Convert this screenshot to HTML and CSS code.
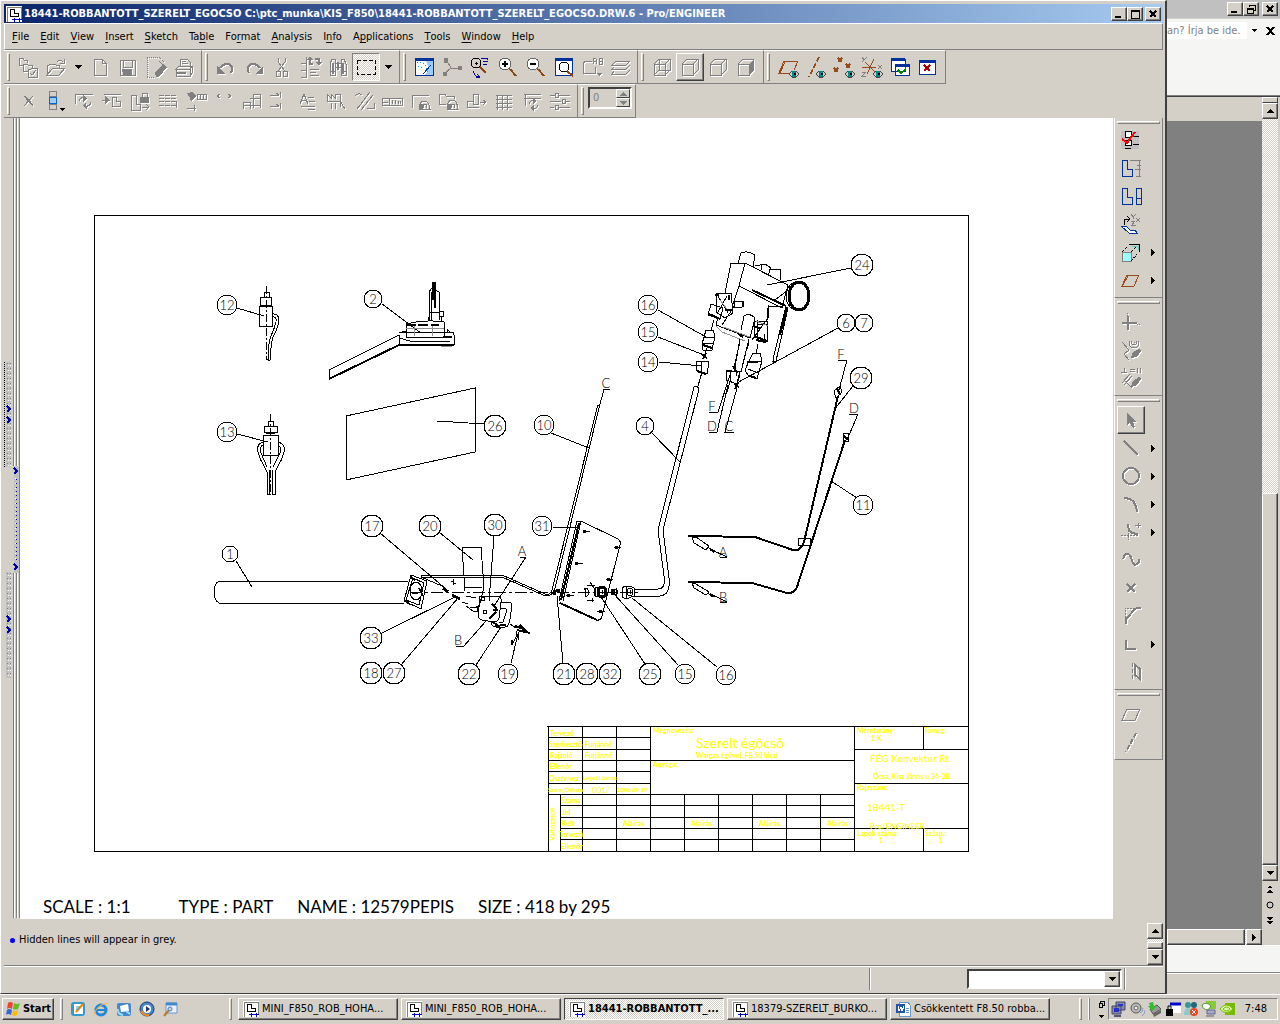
FILE: index.html
```
<!DOCTYPE html>
<html lang="en">
<head>
<meta charset="utf-8">
<title>18441-ROBBANTOTT_SZERELT_EGOCSO - Pro/ENGINEER</title>
<link rel="stylesheet" href="styles.css">
</head>
<body>
<svg class="defs" aria-hidden="true">
  <symbol id="app" viewBox="0 0 16 16"><path d="M0 0h16v16H0z" fill="#fff"/><path d="M1 16V1h14v12" fill="none" stroke="#808080"/><path d="M4 3v7h8V7H8V3z" fill="none" stroke="#000" stroke-width="1"/><path d="M6 13h10M8 12v4M13 12v4" stroke="#00c" fill="none"/></symbol>
  <symbol id="eye" viewBox="0 0 10 8"><path d="M0 4l3-3h4l3 3-3 3H3z" fill="#d4d0c8" stroke="#444"/><path d="M3 1h4v6H3z" fill="#088"/><path d="M5 3h2v2H5z" fill="#000"/></symbol>
  <symbol id="down" viewBox="0 0 7 4"><path d="M0 0h7L4 4H3z"/></symbol>
  <symbol id="up" viewBox="0 0 7 4"><path d="M0 4h7L4 0H3z"/></symbol>
  <symbol id="right" viewBox="0 0 4 7"><path d="M0 0v7l4-3V3z"/></symbol>
</svg>

<div class="desktop">
<main class="window">
  <header class="titlebar">
    <svg class="i16"><use href="#app"/></svg>
    <h1>18441-ROBBANTOTT_SZERELT_EGOCSO C:\ptc_munka\KIS_F850\18441-ROBBANTOTT_SZERELT_EGOCSO.DRW.6 - Pro/ENGINEER</h1>
    <button class="cap" aria-label="Minimize"><svg viewBox="0 0 12 10"><path d="M2 8h6" stroke-width="2"/></svg></button>
    <button class="cap" aria-label="Maximize"><svg viewBox="0 0 12 10"><path d="M2 2h8" stroke-width="2"/><path d="M2 1v8h8V1"/></svg></button>
    <button class="cap close" aria-label="Close"><svg viewBox="0 0 12 10"><path d="M3 2l6 6M9 2L3 8" stroke-width="2"/></svg></button>
  </header>
  <nav class="menubar">
    <button><u>F</u>ile</button><button><u>E</u>dit</button><button><u>V</u>iew</button><button><u>I</u>nsert</button><button><u>S</u>ketch</button><button>Ta<u>b</u>le</button><button>Fo<u>r</u>mat</button><button><u>A</u>nalysis</button><button>I<u>n</u>fo</button><button>A<u>p</u>plications</button><button><u>T</u>ools</button><button><u>W</u>indow</button><button><u>H</u>elp</button>
  </nav>

  <div class="bars">
    <div class="bar">
      <button class="tb off" aria-label="Set working directory"><svg viewBox="0 0 24 24"><path d="M7 10H3V3h4l1 2h3v3M12 16H7V9h4l1 1h4v3M12 22V14h3l1-1h5v9zM14 18l2 2 4-5"/></svg></button>
      <button class="tb off" aria-label="Open"><svg viewBox="0 0 24 24"><path d="M3 20V10h2l1-1h4l2 1h3v3M3 20h12l6-7H9zM13 7q3-4 6 0M20 4v4h-4"/></svg></button>
      <button class="drop" aria-label="Open recent"><svg><use href="#down"/></svg></button>
      <button class="tb off" aria-label="New"><svg viewBox="0 0 24 24"><path d="M6 4h8l4 4v12H6zM14 4v4h4"/></svg></button>
      <button class="tb off" aria-label="Save"><svg viewBox="0 0 24 24"><path d="M4 5h15v15H4zM7 5v7h9V5"/><path class="f" d="M7 14h9v6H7zM6 14h1v6"/></svg></button>
      <button class="tb off" aria-label="Erase"><svg viewBox="0 0 24 24"><path stroke-dasharray="1 1" d="M3 22V2h12l5 5M3 22h8"/><path class="f" d="M11 18l8-9 4 3-8 10h-3z"/><path d="M15 6l4 4"/></svg></button>
      <button class="tb off" aria-label="Print"><svg viewBox="0 0 24 24"><path d="M4 14l3-3h13l-2 3zM4 14v7h14v-7M20 11v7l-2 3M8 11V4h7l3 3v4M10 6h4M10 8h6"/><path class="f" d="M5 17h9v2H5z"/></svg></button>
    </div>
    <div class="bar">
      <button class="tb off" aria-label="Undo"><svg viewBox="0 0 24 24"><path stroke-width="2" d="M6 13q4-5 9-4 5 3 2 9"/><path class="f" d="M3 11v8h8z"/></svg></button>
      <button class="tb off" aria-label="Redo"><svg viewBox="0 0 24 24"><path stroke-width="2" d="M18 13q-4-5-9-4-5 3-2 9"/><path class="f" d="M21 11v8h-8z"/></svg></button>
      <button class="tb off" aria-label="Cut"><svg viewBox="0 0 24 24"><path d="M8 3v4l7 9M15 3v4l-7 9M6 16h4v5H6zM13 16h4v5h-4z"/></svg></button>
      <button class="tb off" aria-label="Regenerate"><svg viewBox="0 0 24 24"><path d="M3 8h5V2M3 15h5V9M3 22h5v-6M12 14h9M12 17h6M12 20h9"/><path stroke-width="2" d="M12 3v6h3M21 9V4h-4"/><path class="f" d="M9 5l3-4 3 4zM18 7h6l-3 4z"/></svg></button>
      <button class="tb off" aria-label="Find"><svg viewBox="0 0 24 24"><path d="M4 20V9l2-5h3v16zM15 20V4h3l2 5v11zM9 8h6M9 12h6M4 16h5M15 16h5" /><path class="f" d="M6 8h2v11H6zM16 8h2v11h-2zM11 7h2v8h-2z"/></svg></button>
      <button class="tb checked" aria-label="Selection box" aria-pressed="true"><svg viewBox="0 0 24 24"><path stroke-dasharray="4 2" d="M3 5h18v14H3z"/></svg></button>
      <button class="drop" aria-label="Selection options"><svg><use href="#down"/></svg></button>
    </div>
    <div class="bar">
      <button class="tb" aria-label="Repaint"><svg viewBox="0 0 24 24"><path d="M3 3h18v17H3z" fill="#fff" stroke="#039"/><path d="M3 4h18" stroke="#039" stroke-width="3"/><path d="M14 6h7v14h-9q7-5 2-14z" fill="#9cf" stroke="none"/><path stroke="#09f" stroke-dasharray="1 2" d="M5 7q9 0 11 11M6 11q4 1 6 6"/><path d="M11 19l8-9" stroke="#036"/></svg></button>
      <button class="tb" aria-label="Spin center"><svg viewBox="0 0 24 24"><path stroke="#808080" d="M7 6l4 7h9M11 13l-7 6"/><path class="f" d="M4 3h4v5H4zM18 11h4v4h-4zM3 17h4v4H3z"/></svg></button>
      <button class="tb" aria-label="Orient mode"><svg viewBox="0 0 24 24"><circle cx="8" cy="8" r="5"/><path d="M7 8h3M8 7v3"/><path stroke="#8b4513" stroke-width="2" d="M12 12l6 6"/><path stroke="#009" d="M13 3h7M15 6h5M15 9h4M6 16q-1 5 5 6M9 19l3 3-4 1M19 3v2"/></svg></button>
      <button class="tb" aria-label="Zoom in"><svg viewBox="0 0 24 24"><path stroke="#8b4513" stroke-width="2" d="M14 14l6 7"/><circle cx="9" cy="9" r="6" fill="#fff" stroke="#666"/><path stroke-width="2" d="M6 9h6M9 6v6"/></svg></button>
      <button class="tb" aria-label="Zoom out"><svg viewBox="0 0 24 24"><path stroke="#8b4513" stroke-width="2" d="M14 14l6 7"/><circle cx="9" cy="9" r="6" fill="#fff" stroke="#666"/><path stroke-width="2" d="M6 9h6"/></svg></button>
      <button class="tb" aria-label="Refit"><svg viewBox="0 0 24 24"><path d="M3 3h17v17H3z" fill="#fff" stroke="#039"/><path d="M3 4h17" stroke="#039" stroke-width="3"/><circle cx="12" cy="12" r="5"/><path stroke="#8b4513" stroke-width="2" d="M15 16l6 5"/></svg></button>
      <button class="tb off" aria-label="Saved views"><svg viewBox="0 0 24 24"><path d="M15 12v6H3V8l3-2h6M13 9V4l1-1h1l1 1v5M13 6h3M19 9V3h3v6zM19 6h3"/><path class="f" d="M16 18h6l-3 3z"/></svg></button>
      <button class="tb off" aria-label="Layers"><svg viewBox="0 0 24 24"><path d="M8 6h14l-4 4H4zM6 12l-2 2h14l4-4M6 16l-2 3h14l4-4"/></svg></button>
    </div>
    <div class="bar">
      <button class="tb off" aria-label="Wireframe"><svg viewBox="0 0 24 24"><path d="M4 9h11v11H4zM9 4h11v11H9zM4 9l5-5M15 9l5-5M4 20l5-5M15 20l5-5"/></svg></button>
      <button class="tb off raised" aria-label="Hidden line"><svg viewBox="0 0 24 24"><path d="M4 9h11v11H4zM4 9l5-5h11v11l-5 5M15 9l5-5"/></svg></button>
      <button class="tb off" aria-label="No hidden"><svg viewBox="0 0 24 24"><path d="M4 9h11v11H4zM4 9l5-5h11v11l-5 5M15 9l5-5"/></svg></button>
      <button class="tb off" aria-label="Shading"><svg viewBox="0 0 24 24"><path d="M4 9h11v11H4zM4 9l5-5h11"/><path class="f" d="M15 9l5-5v11l-5 5z"/></svg></button>
    </div>
    <div class="bar brown">
      <button class="tb" aria-label="Planes on/off"><svg viewBox="0 0 24 24"><path stroke-width="1" d="M13 18H3l5-12h14l-4 9M4 18l5-11"/><use href="#eye" x="13" y="15" width="10" height="8"/></svg></button>
      <button class="tb" aria-label="Axes on/off"><svg viewBox="0 0 24 24"><path stroke-width="2" stroke-dasharray="5 2" d="M15 2L5 22"/><use href="#eye" x="12" y="15" width="10" height="8"/></svg></button>
      <button class="tb" aria-label="Points on/off"><svg viewBox="0 0 24 24"><path stroke-width="2" d="M6 3l4 4M10 3L6 7M14 9l4 4M18 9l-4 4M2 13l4 4M6 13l-4 4"/><use href="#eye" x="13" y="15" width="10" height="8"/></svg></button>
      <button class="tb" aria-label="Coordinate systems on/off"><svg viewBox="0 0 24 24"><path stroke-width="1" d="M2 12h14M14 4L7 19M5 7l10 10"/><path stroke="#808080" d="M2 2l2 3 3-3M4 5L2 7M18 10l4 4M22 10l-4 4M2 17h4l-4 4h4"/><use href="#eye" x="13" y="15" width="10" height="8"/></svg></button>
      <button class="tb" aria-label="Activate windows"><svg viewBox="0 0 24 24"><path d="M3 4h14v12H3zM7 9h14v11H7z" fill="#fff" stroke="#039"/><path stroke="#039" stroke-width="3" d="M3 4h14M7 10h14"/><path stroke="#080" stroke-width="2" d="M10 15l3 3 5-4"/></svg></button>
      <button class="tb" aria-label="Close window"><svg viewBox="0 0 24 24"><path d="M3 5h16v14H3z" fill="#fff" stroke="#039"/><path stroke="#039" stroke-width="3" d="M3 6h16"/><path stroke="#a00" stroke-width="2" d="M8 10l6 6M14 10l-6 6"/></svg></button>
    </div>
  </div>
  <div class="bars">
    <div class="bar">
      <button class="tb off" aria-label="Delete"><svg viewBox="0 0 24 24"><path stroke-width="1" d="M8 7l9 10M17 7l-9 10M9 7l8 9"/></svg></button>
      <button class="tb" aria-label="Tree column"><svg viewBox="0 0 24 24"><path stroke="#808080" d="M5 2h7v5H5zM5 15h7v5H5z"/><path stroke="#06c" fill="#9cf" d="M5 8h7v6H5z"/><path fill="#000" stroke="none" d="M15 19h6l-3 3z"/></svg></button>
      <button class="tb off" aria-label="Update view"><svg viewBox="0 0 24 24"><path d="M3 15V5h18M7 12q1-4 6-3M19 13q-1 5-6 4"/><path class="f" d="M11 6l4 3-4 4zM14 13l-3 4 4 3z"/></svg></button>
      <button class="tb off" aria-label="Move view"><svg viewBox="0 0 24 24"><path d="M4 5h17M12 8v9h8v-5h-4V8zM2 11h8"/><path class="f" d="M5 7l4 4-4 4z"/></svg></button>
      <button class="tb off" aria-label="Lock view"><svg viewBox="0 0 24 24"><path d="M3 6v15h9v-6H8V6zM14 8V4h5v4M14 18h7M18 15l3 3-3 3"/><path class="f" d="M12 8h9v6h-9z"/></svg></button>
      <button class="tb off" aria-label="Table"><svg viewBox="0 0 24 24"><path stroke-dasharray="5 1" d="M3 6h18M3 9h18M3 12h18M3 16h18"/><path d="M20 12v7"/></svg></button>
      <button class="tb off" aria-label="Show dimensions"><svg viewBox="0 0 24 24"><path d="M13 5h9v5h-9zM16 5v5M19 5v5M3 19h9M10 16v6"/><path class="f" d="M3 4l5-1 4 4-5 6-1-4z"/></svg></button>
      <button class="tb off" aria-label="Brackets"><svg viewBox="0 0 24 24"><path d="M8 5L5 7l3 2M16 5l3 2-3 2"/></svg></button>
      <button class="tb off" aria-label="Align"><svg viewBox="0 0 24 24"><path d="M3 20v-7h7v7M13 19V5h7v14M10 9h10M3 16h17"/></svg></button>
      <button class="tb off" aria-label="Arrange"><svg viewBox="0 0 24 24"><path d="M2 6h9M12 3v6M8 4l3 2M2 17h9M12 14v6M8 15l3 2"/></svg></button>
      <button class="tb off" aria-label="Note"><svg viewBox="0 0 24 24"><path d="M4 15l4-10 4 10M6 11h4M12 8h6M13 12h6M5 17h14M12 20h7"/></svg></button>
      <button class="tb off" aria-label="Surface finish"><svg viewBox="0 0 24 24"><path d="M3 13V5l4 4V5l4 4V5h5v7M3 12h13l5 8M7 14v6M11 14v6M16 6v12"/></svg></button>
      <button class="tb off" aria-label="Switch"><svg viewBox="0 0 24 24"><path stroke-width="1" d="M3 7q3-4 7-1M18 3L5 20M21 6L9 21M15 19h7v-5"/></svg></button>
      <button class="tb off" aria-label="Tolerance"><svg viewBox="0 0 24 24"><path d="M2 9h20v7H2zM9 9v7M3 13h5M12 11v4M15 11v4M18 12v3M20 12v3"/></svg></button>
      <button class="tb off" aria-label="Symbol"><svg viewBox="0 0 24 24"><path d="M4 19V6h17M11 20q0-8 5-8t6 8zM15 19v-4h3v4"/><path class="f" d="M12 15h3v5h-3z"/></svg></button>
      <button class="tb off" aria-label="Symbol from folder"><svg viewBox="0 0 24 24"><path d="M3 15V5h6l1 2h8v3M3 15h7M11 20q0-9 5-9t6 9zM15 19v-4h3v4"/><path class="f" d="M12 15h3v5h-3z"/></svg></button>
      <button class="tb off" aria-label="Jog"><svg viewBox="0 0 24 24"><path d="M9 5h5v10H9zM3 12v6h12M9 12H3M16 13h5M19 11l3 2-3 3"/></svg></button>
      <button class="tb off" aria-label="Insert table"><svg viewBox="0 0 24 24"><path d="M4 6h16M4 10h16M4 14h16M4 18h16M5 6v15M10 6v15M15 6v15"/></svg></button>
      <button class="tb off" aria-label="Update table"><svg viewBox="0 0 24 24"><path d="M4 5h17M4 9h17M5 5v12M9 15q1-4 5-3M18 16q-1 4-5 4"/><path class="f" d="M13 9l4 3-4 3zM14 16l-4 3 4 4z"/></svg></button>
      <button class="tb off" aria-label="Parameters"><svg viewBox="0 0 24 24"><path d="M2 6h5M11 6h11M2 12h11M17 12h5M2 18h4M10 18h12M7 4h3v4H7zM14 10h3v4h-3zM7 16h3v4H7z"/></svg></button>
    </div>
    <div class="bar">
      <div class="spin"><input type="text" value="0" aria-label="Sheet" disabled><div class="spinbtns"><button aria-label="Next"><svg><use href="#up"/></svg></button><button aria-label="Previous"><svg><use href="#down"/></svg></button></div></div>
    </div>
  </div>

  <div class="work">
    <div class="rail" aria-hidden="true">
      <svg width="16" height="800" viewBox="4 118 16 800"><path stroke="#808080" d="M13 118v348M16 118v348M19 118v800M13 573v345M16 573v345"/><path stroke="#fff" d="M14 118v348M17 118v348M14 573v345M17 573v345"/><path fill="#c0c0c0" stroke="none" d="M6 362h5v105H6zM14 467h5v106h-5zM6 572h5v106H6z"/><path stroke="#808080" stroke-dasharray="1 4" d="M7 363v104M10 363v104M7 573v104M10 573v104"/><path stroke="#fff" stroke-dasharray="1 4" d="M8 365v102M10 365v102M8 575v102M10 575v102M15 478v82"/><path stroke="#000" stroke-dasharray="1 1" d="M4 362v105"/><path stroke="#00a" stroke-dasharray="1 3" d="M16 479v82"/><path fill="none" stroke="#00a" stroke-width="2" d="M7 406l3 3-3 3M7 417l3 3-3 3M14 468l3 3-3 3M14 564l3 3-3 3M7 616l3 3-3 3M7 627l3 3-3 3"/></svg>
    </div>
    <section class="canvas" aria-label="Drawing sheet">
      <svg class="sheet" viewBox="20 118 1093 774">
        <path d="M94 215H968V851H94z"/>
        <!-- title block -->
        <path d="M547 726H968M548 726V851M582 726V851M616 726V851M650 726V851M854 726V851M548 737H650M548 749H650M548 760H854M548 771H650M548 783H650M548 794H854M560 794V851M560 805H854M560 817H854M560 828H968M560 839H854M684 794V851M718 794V851M752 794V851M786 794V851M820 794V851M854 749H968M854 783H968M923 726V749M923 828V851"/>
        <g class="y">
          <text x="550" y="736">Tervezô</text><text x="549" y="747">Szerkesztô</text><text x="550" y="758">Rajzoló</text><text x="550" y="769">Ellenôr</text><text x="549" y="781">Osztv.vez.</text><text x="548" y="792" class="s">Szám/Dátum</text>
          <text x="585" y="747">Furjánné</text><text x="585" y="758">Furjánné</text><text x="583" y="780" class="s">Legeôi János</text><text x="592" y="793" class="m">001/</text><text x="617" y="792" class="s">2006.09.19</text>
          <text x="561" y="803">Száma</text><text x="562" y="815">Jel</text><text x="562" y="826">Kelt</text><text x="559" y="837">Tervezô</text><text x="561" y="849">Ellenôr</text><text transform="translate(555 841) rotate(-90)">Változások</text>
          <text x="623" y="826">Aláírás</text><text x="691" y="826">Aláírás</text><text x="759" y="826">Aláírás</text><text x="827" y="826">Aláírás</text>
          <text x="653" y="733">Megnevezés:</text><text x="696" y="748" class="xl">Szerelt égôcsô</text><text x="696" y="758">Wargas égôvel, F8.50 kicsi</text><text x="653" y="767">Anyaga:</text>
          <text x="857" y="733">Méretarány:</text><text x="871" y="741">1:X</text><text x="924" y="733">Tömeg:</text><text x="870" y="762" class="l">FÉG Konvektor Rt.</text><text x="873" y="779">Ócsa, Kiss János u.34-38.</text><text x="857" y="790">Rajzszám:</text><text x="867" y="811" class="l">18441-T</text><text x="870" y="829" class="m">Pro/ENGINEER</text><text x="857" y="836">Lapok száma:</text><text x="879" y="843">1</text><text x="925" y="836">Sz.lap.:</text><text x="939" y="843">1</text>
        </g>
        <!-- leaders -->
        <path d="M237 308L264 316M237 434L268 442M382 304L421 333M437 421L484 424M551 433L589 448M652 433L681 463M658 310L706 337M658 337L704 355M659 362L701 366M851 268L767 285M838 328L735 384M853 386L834 410M857 498L831 481M236 561L252 587M380 533L446 589M439 532L473 560M494 536L489 601M553 527L580 528M380 634L455 597M401 665L458 598M476 665L501 627M511 663L518 634M563 663L557 596M645 664L601 597M678 665L614 594M717 667L632 598"/>
        <path d="M520 557H526L494 606M456 646H464L486 621M604 389H610M604 389L599 408M720 557H727L712 550M720 602H727L711 594M709 412H718L731 372M709 432H717L728 385M734 432H725L737 388M838 360H847L839 390M849 414H858L847 440"/>
        <!-- thermocouples 12 and 13 -->
        <path d="M264 297V292H269V297M260 297H271V305H260zM262 305V306M269 305V306M259 306H272V326H259zM272 314Q279 313 279 321Q278 328 273 337Q271 344 270 360M272 317Q277 316 276 322Q274 330 271 336Q268 344 268 360H270"/>
        <path stroke-dasharray="8 2 2 2" d="M266 286V360M270 414V495"/>
        <path d="M268 426V421H273V426M264 426H277V432H264zM266 433H275M263 435H278V455H263zM263 442Q256 444 258 452Q260 460 264 466L267 472V494H269V470M263 445Q259 447 261 453L267 467M278 442Q286 444 284 452Q282 460 278 466L275 472V494H272V470M278 445Q282 447 280 453L273 467"/>
        <!-- pilot assembly 2 -->
        <path d="M399 335L329 370V379M399 335V345M399 332H453Q456 338 454 345H399M399 338L410 341H450M406 324V337M444 322V336M406 324Q425 319 444 322M406 337H444M429 320V292L432 288L439 292V320M431 292V320M429 312H439M440 311H443V316H439M447 333V329M452 333L447 330M428 317V321M441 316V321"/>
        <path stroke-width="2" d="M329 379L399 345H454M433 282V300M435 282V308M407 325H416M443 337H452M402 332H407"/>
        <ellipse cx="423" cy="325" rx="5" ry="1"/><ellipse cx="435" cy="325" rx="4" ry="1"/>
        <path stroke="#909090" d="M414 326V336M432 326V336M406 328H444M441 346H452"/>
        <path d="M346 416L475 388V452L346 480z"/>
        <!-- burner tube 1 -->
        <path d="M408 581H219Q214 584 214 592Q214 600 219 603H404M411 575L427 581L421 609L404 601zM413 578L424 583L419 605L406 600z"/>
        <ellipse cx="416" cy="591" rx="6" ry="9"/>
        <path stroke-width="2" d="M419 588L423 596M411 577L415 580M405 601L410 604M412 593H418"/>
        <path d="M421 579V575H502L545 594Q550 596 552 590L597 408M421 577H502L543 595Q551 599 555 588L599 408V405H597V408M421 577L442 586"/>
        <path stroke-dasharray="12 3 3 3" d="M410 592H640"/>
        <path stroke-width="3" d="M443 588L448 592M452 595L460 599M554 590V595M556 590H560"/>
        <path d="M462 547H481L484 587L479 607L476 606M462 547L465 591M451 581L456 584M453 579V585M465 587H482M466 596L476 598M462 602L468 604M470 607H477V611H473L466 606"/>
        <path d="M480 596H497Q502 597 501 602L499 618Q498 622 494 622L482 620Q478 619 478 614zM492 622Q491 627 496 627H505Q509 627 510 619L512 606Q512 602 507 602H501M501 608H505Q507 609 506 613L503 622H499"/>
        <circle cx="485" cy="612" r="2"/><circle cx="483" cy="599" r="2"/>
        <path stroke-width="2" d="M492 604L497 609M493 610H498M489 619L496 612M492 622L498 625M495 626L506 625M515 626L524 629M517 630L530 633M520 625L528 633M512 640V645"/>
        <path d="M510 624L516 628M516 631V637L512 645M519 632L518 640"/>
        <!-- plate 31 -->
        <path d="M577 521L559 601M581 521L563 601M577 521H581L618 539Q621 541 620 545L602 616Q601 621 596 620L559 603"/>
        <path stroke-width="2" d="M579 523L561 600M560 603L597 620"/>
        <path d="M583 531H590M614 547H621M575 563H583M606 579H613M566 595H574M597 611H605M585 588V597Q590 596 588 590Q586 586 584 590"/>
        <path stroke-width="3" d="M583 531H586M615 547H618M575 563H578M607 579H610M567 595H570M599 611H602M613 589V595"/>
        <path d="M587 585H595M590 582L594 588M587 600H594M592 598V602M595 587V597M622 588V597L626 599L634 596V588L630 586H625zM626 586V599M616 588L618 592L616 596"/>
        <ellipse cx="602" cy="592" rx="4" ry="5" stroke-width="3"/><ellipse cx="597" cy="592" rx="3" ry="5"/><ellipse cx="630" cy="592" rx="3" ry="4"/><circle cx="614" cy="592" r="3"/>
        <path d="M602 590V594M630 590V594"/>
        <!-- gas pipe 4 -->
        <path d="M694 387L658 530L664 576Q666 589 658 589H634M699 389L663 530L669 578Q671 595 660 596H634M694 387Q697 385 699 389M702 372L698 386"/>
        <!-- leads 29 and 11 -->
        <path stroke-width="2" d="M688 536L755 537L793 550Q800 552 804 542L838 396M688 582L752 583L787 593Q794 594 797 587L845 440"/>
        <path d="M692 537L696 537L709 546L706 550L694 543zM707 547L715 551M692 583L696 584L709 592L706 595L694 588zM707 593L715 597M798 538H810V545H798zM834 391L840 386L842 392L836 398zM843 433H848V441H843z"/>
        <path stroke-width="2" d="M710 549L714 552M710 594L713 597M844 436L848 440M837 388L840 395"/>
        <!-- valve 24 -->
        <path d="M731 263H745L788 285M731 263L725 293M745 263L739 286L782 308L788 285M738 263L741 253Q748 250 755 255L753 267M755 266L765 264L771 268L768 275M761 264V270M769 269H780V280M767 308L768 320M739 286L733 304M718 317L716 325L750 338L755 318Q749 312 744 316L741 330M735 305L722 325M752 340L768 318M768 318V305M775 300L788 290M768 306L782 307M757 320V340M767 324H757M764 340V334"/>
        <path d="M716 294L731 293L733 313L725 318L716 312zM711 304L723 308L720 319L708 315zM718 296L728 313M727 296L718 312M734 301H742Q745 304 742 307H734zM754 321H767V341L754 337z"/>
        <path stroke-width="2" d="M715 295H719M729 295V300M709 314L720 319M725 310H732M743 301V307M738 334L743 337M753 326L760 328M754 336L767 341M756 340L766 342M752 290L786 306"/>
        <path stroke="#909090" d="M723 327L750 337M720 300L727 309M716 326L722 332L745 341M756 321L768 326"/>
        <ellipse cx="799" cy="296" rx="10" ry="14" stroke-width="3"/><ellipse cx="797" cy="296" rx="11" ry="14"/>
        <path d="M786 306L774 355L773 361L776 361L788 308"/><path stroke-width="2" d="M787 307L780 335"/>
        <path d="M714 320L711 330M706 330H713L715 336L712 350H703L702 344zM703 337H714M703 343H713M697 361L709 362L707 374L696 370zM701 361V372M707 348L705 354M758 344L756 354M753 353H760L762 361L757 379L748 375L745 370L749 361zM749 361L762 362M748 369L758 373M740 339L735 367M749 339L741 372M726 371H740L737 384L726 380zM730 371V382M735 366L737 376M731 379L727 392"/>
        <path stroke-width="2" d="M703 345L712 348M702 355L707 358M706 353L703 359M697 371L706 374M750 376L756 378M747 362H758M726 371H732M733 366L737 373M734 384L739 387M738 383L735 389"/>
        <path stroke-dasharray="9 3 2 3" d="M740 342L734 367M749 342L737 385"/>
        <!-- balloons -->
        <g class="b">
          <g><circle cx="227" cy="305" r="10"/><text x="227" y="310">12</text></g><g><circle cx="373" cy="299" r="9"/><text x="373" y="304">2</text></g><g><circle cx="227" cy="432" r="10"/><text x="227" y="437">13</text></g><g><circle cx="495" cy="426" r="11"/><text x="495" y="431">26</text></g>
          <g><circle cx="544" cy="425" r="10"/><text x="544" y="430">10</text></g><g><circle cx="645" cy="426" r="9"/><text x="645" y="431">4</text></g><g><circle cx="648" cy="305" r="10"/><text x="648" y="310">16</text></g><g><circle cx="648" cy="332" r="10"/><text x="648" y="337">15</text></g><g><circle cx="648" cy="362" r="10"/><text x="648" y="367">14</text></g>
          <g><circle cx="862" cy="265" r="11"/><text x="862" y="270">24</text></g><g><circle cx="846" cy="323" r="9"/><text x="846" y="328">6</text></g><g><circle cx="864" cy="323" r="9"/><text x="864" y="328">7</text></g><g><circle cx="861" cy="378" r="11"/><text x="861" y="383">29</text></g><g><circle cx="863" cy="505" r="10"/><text x="863" y="510">11</text></g>
          <g><circle cx="372" cy="526" r="11"/><text x="372" y="531">17</text></g><g><circle cx="430" cy="526" r="11"/><text x="430" y="531">20</text></g><g><circle cx="495" cy="525" r="11"/><text x="495" y="530">30</text></g><g><circle cx="542" cy="526" r="10"/><text x="542" y="531">31</text></g><g><circle cx="230" cy="554" r="8"/><text x="230" y="559">1</text></g>
          <g><circle cx="371" cy="638" r="11"/><text x="371" y="643">33</text></g><g><circle cx="371" cy="673" r="11"/><text x="371" y="678">18</text></g><g><circle cx="394" cy="673" r="11"/><text x="394" y="678">27</text></g><g><circle cx="469" cy="674" r="11"/><text x="469" y="679">22</text></g><g><circle cx="508" cy="674" r="10"/><text x="508" y="679">19</text></g>
          <g><circle cx="564" cy="674" r="11"/><text x="564" y="679">21</text></g><g><circle cx="587" cy="674" r="11"/><text x="587" y="679">28</text></g><g><circle cx="610" cy="674" r="11"/><text x="610" y="679">32</text></g><g><circle cx="650" cy="674" r="11"/><text x="650" y="679">25</text></g><g><circle cx="685" cy="674" r="10"/><text x="685" y="679">15</text></g><g><circle cx="726" cy="675" r="10"/><text x="726" y="680">16</text></g>
          <text x="606" y="388">C</text><text x="522" y="556">A</text><text x="458" y="645">B</text><text x="723" y="557">A</text><text x="723" y="602">B</text><text x="712" y="411">F</text><text x="712" y="431">D</text><text x="729" y="431">C</text><text x="841" y="359">F</text><text x="854" y="413">D</text>
        </g>
      </svg>
      <p class="info"><span>SCALE : 1:1</span><span>TYPE : PART</span><span>NAME : 12579PEPIS</span><span>SIZE : 418 by 295</span></p>
    </section>
    <aside class="tools">
      <div class="vbar">
        <div><button class="tb" aria-label="Tree settings"><svg viewBox="0 0 24 24"><path fill="#c0c0c0" stroke="none" d="M2 3h18v18H2z"/><path fill="#fff" stroke-width="1" d="M6 3h6v6H6zM6 12h6v5H6zM6 20h6"/><path d="M14 8h6M14 16h6"/><path stroke="red" stroke-width="2" d="M3 11l5 4 8-11"/></svg></button></div>
        <div><button class="tb navy" aria-label="Show dimensions"><svg viewBox="0 0 24 24"><path d="M3 4h5v9h5v7H3z"/><path stroke="#808080" d="M11 4h11M20 4v16M18 9h4M16 13h6M17 20h5"/></svg></button></div>
        <div><button class="tb navy" aria-label="Insert view"><svg viewBox="0 0 24 24"><path d="M3 4h5v9h5v7H3zM17 4h5v16h-5zM17 14h5"/></svg></button></div>
        <div><button class="tb" aria-label="Orient"><svg viewBox="0 0 24 24"><path fill="#fff" stroke="#039" d="M2 14h5l4 4h5l2 3h-8z"/><path d="M5 13V7h6M8 4l3 3-3 3"/><path stroke="#808080" d="M12 2l2 3 3-3M14 5v2M17 6l4 4M21 6l-4 4M12 9h4l-3 4h4"/></svg></button></div>
        <div><button class="tb" aria-label="Extrude"><svg viewBox="0 0 24 24"><path fill="#9ff" stroke="#808080" d="M3 12h9v9H3z"/><path stroke-dasharray="1 1" d="M3 12l8-8M12 12l8-8M12 21l8-9"/><path d="M11 4h9v8"/><path stroke="#6cc" d="M13 6h6v4"/></svg></button><button class="more" aria-label="More shapes"><svg><use href="#right"/></svg></button></div>
        <div><button class="tb brownt" aria-label="Datum plane"><svg viewBox="0 0 24 24"><path stroke-width="1" d="M3 18L8 7h12l-5 11z"/><path d="M4 17L9 8"/></svg></button><button class="more" aria-label="More datums"><svg><use href="#right"/></svg></button></div>
      </div>
      <div class="vbar">
        <div><button class="tb off" aria-label="References"><svg viewBox="0 0 24 24"><path stroke-width="2" d="M9 6v14M3 13h15"/><path stroke-dasharray="1 1" d="M8 3v3M18 14h4"/></svg></button></div>
        <div><button class="tb off" aria-label="Sketch chain"><svg viewBox="0 0 24 24"><path d="M3 4l7 8-5 4 5 6M10 3q0 7 5 7t5-7M12 3q0 4 3 4t3-4M15 4h1"/><path class="f" d="M12 20l2-6 6-3 2 2-4 6z"/></svg></button></div>
        <div><button class="tb off" aria-label="Constraints"><svg viewBox="0 0 24 24"><path d="M5 2v4M2 6h6M11 3h5M11 5h5M19 2l-1 5M22 2l-1 5M3 17L11 8M5 19l8-9M5 14l8 8"/><path class="f" d="M12 21l2-6 6-4 2 2-4 6z"/></svg></button></div>
      </div>
      <div class="vbar">
        <div><button class="tb off raised" aria-label="Select"><svg viewBox="0 0 24 24"><path class="f" d="M8 4v13l3-2 3 5 2-1-2-5h3z"/></svg></button></div>
        <div><button class="tb off" aria-label="Line"><svg viewBox="0 0 24 24"><path stroke-width="2" d="M5 5l14 14"/></svg></button><button class="more" aria-label="More lines"><svg><use href="#right"/></svg></button></div>
        <div><button class="tb off" aria-label="Circle"><svg viewBox="0 0 24 24"><circle cx="12" cy="12" r="8" stroke-width="2"/></svg></button><button class="more" aria-label="More circles"><svg><use href="#right"/></svg></button></div>
        <div><button class="tb off" aria-label="Arc"><svg viewBox="0 0 24 24"><path stroke-width="2" d="M5 6q12 0 13 14"/></svg></button><button class="more" aria-label="More arcs"><svg><use href="#right"/></svg></button></div>
        <div><button class="tb off" aria-label="Fillet"><svg viewBox="0 0 24 24"><path stroke-width="2" d="M9 4q0 10 10 10"/><path d="M19 3v5M16 5h6"/><path stroke-dasharray="2 1" d="M9 4v16M2 15h18"/></svg></button><button class="more" aria-label="More fillets"><svg><use href="#right"/></svg></button></div>
        <div><button class="tb off" aria-label="Spline"><svg viewBox="0 0 24 24"><path stroke-width="2" d="M4 11q2-6 5-5t4 7q3 7 7 1v-3"/></svg></button></div>
        <div><button class="tb off" aria-label="Point"><svg viewBox="0 0 24 24"><path stroke-width="2" d="M8 8l8 8M16 8l-8 8"/></svg></button></div>
        <div><button class="tb off" aria-label="Chamfer"><svg viewBox="0 0 24 24"><path stroke-width="2" d="M7 15L17 4M17 4h5M7 15v5"/><path stroke-dasharray="2 1" d="M6 14V4h11"/></svg></button></div>
        <div><button class="tb off" aria-label="Use edge"><svg viewBox="0 0 24 24"><path stroke-width="2" d="M7 8v9h10"/></svg></button><button class="more" aria-label="More edges"><svg><use href="#right"/></svg></button></div>
        <div><button class="tb off" aria-label="Mirror"><svg viewBox="0 0 24 24"><path stroke-width="2" d="M16 5v10l5 4V9z"/><path stroke-dasharray="4 2" d="M13 3v18"/></svg></button></div>
      </div>
      <div class="vbar">
        <div><button class="tb off" aria-label="Draft plane"><svg viewBox="0 0 24 24"><path stroke-width="1" d="M3 18L8 7h13l-5 11z"/></svg></button></div>
        <div><button class="tb off" aria-label="Draft axis"><svg viewBox="0 0 24 24"><path stroke-width="2" stroke-dasharray="5 2" d="M17 3L7 22"/></svg></button></div>
      </div>
    </aside>
  </div>

  <div class="message">
    <p><span class="dot"></span>Hidden lines will appear in grey.</p>
    <div class="miniscroll"><button class="sb" aria-label="Scroll up"><svg><use href="#up"/></svg></button><span class="track"></span><span class="thumb"></span><button class="sb" aria-label="Scroll down"><svg><use href="#down"/></svg></button></div>
  </div>
  <footer class="status">
    <span class="sep"></span>
    <div class="combo"><select aria-label="Filter"><option></option></select><span class="sb"><svg><use href="#down"/></svg></span></div>
    <span class="sep last"></span>
  </footer>
</main>

<section class="word" aria-label="Document window">
  <header class="wtitle"><button class="cap" aria-label="Minimize"><svg viewBox="0 0 12 10"><path d="M2 8h6" stroke-width="2"/></svg></button><button class="cap" aria-label="Restore"><svg viewBox="0 0 12 10"><path d="M4 3V1h6v5H8M4 1h6M2 4h6v5H2zM2 5h6"/></svg></button><button class="cap close" aria-label="Close"><svg viewBox="0 0 12 10"><path d="M3 2l6 6M9 2L3 8" stroke-width="2"/></svg></button></header>
  <div class="whelp"><input type="text" value="an? Írja be ide." aria-label="Help"><button class="wdrop" aria-label="Help history"><svg viewBox="0 0 5 3"><path d="M0 0h5L3 3H2z"/></svg></button><button class="wx" aria-label="Close document"><svg viewBox="0 0 12 10"><path d="M2 1l7 8M9 1L2 9" stroke-width="2"/></svg></button></div>
  <div class="wbody">
    <div class="wleft"><div class="ruler"></div><div class="grey"></div><div class="hscroll"><span class="thumb"></span><span class="track"></span><button class="sb" aria-label="Scroll right"><svg class="v"><use href="#right"/></svg></button></div></div>
    <div class="vscroll"><span class="split"></span><button class="sb" aria-label="Scroll up"><svg><use href="#up"/></svg></button><span class="track"></span><span class="thumb"></span><button class="sb" aria-label="Scroll down"><svg><use href="#down"/></svg></button>
      <button class="pg" aria-label="Previous page"><svg viewBox="0 0 8 8"><path d="M1 4h6L4 0zM1 8h6L4 4zM1 3h6v1H1z"/></svg></button><button class="pg ball" aria-label="Browse object"><svg viewBox="0 0 8 8"><circle cx="4" cy="4" r="3" fill="#ccc" stroke="#000"/></svg></button><button class="pg" aria-label="Next page"><svg viewBox="0 0 8 8"><path d="M1 0h6L4 4zM1 4h6L4 8z"/></svg></button></div>
  </div>
  <div class="wdraw"></div>
  <div class="wstat"></div>
</section>
</div>

<footer class="taskbar">
  <button class="start"><svg viewBox="0 0 16 16"><path fill="#e43" d="M3 2q2-2 5 0L7 8Q4 6 2 8z"/><path fill="#6b2" d="M9 2q3 2 6 0l-2 6q-3 1-5 0z"/><path fill="#36d" d="M2 9q2-2 5 0l-1 5q-3-2-5 0z"/><path fill="#fb0" d="M8 9q3 2 5 0l-1 5q-3 2-5 0z"/></svg>Start</button>
  <span class="tsep"></span>
  <nav class="quick">
    <button aria-label="Show desktop"><svg viewBox="0 0 16 16"><rect x="1" y="1" width="14" height="14" rx="3" fill="#39c"/><path d="M4 3h7l2 2v8H4z" fill="#fff"/><path d="M6 11l7-8" stroke="#e80" stroke-width="2"/><path d="M6 6h4M6 8h3" stroke="#39c"/></svg></button>
    <button aria-label="Internet Explorer"><svg viewBox="0 0 16 16"><circle cx="8" cy="9" r="5" fill="none" stroke="#28d" stroke-width="3"/><path d="M4 9h9" stroke="#28d" stroke-width="2"/><path d="M1 14Q3 4 15 2" stroke="#fb3" fill="none"/></svg></button>
    <button aria-label="Outlook Express"><svg viewBox="0 0 16 16"><rect x="1" y="2" width="14" height="13" rx="2" fill="#48c"/><path d="M4 5l8-2 1 7-8 1z" fill="#fff"/><path d="M2 8q-1 5 5 6M14 13l-4-3" stroke="#9df" stroke-width="2" fill="none"/></svg></button>
    <button aria-label="Media Player"><svg viewBox="0 0 16 16"><circle cx="8" cy="8" r="7" fill="#48c" stroke="#236"/><circle cx="8" cy="8" r="4" fill="#fff"/><path d="M7 5l4 3-4 3z" fill="#236"/><path d="M2 10q3 5 8 4" stroke="#e82" stroke-width="2" fill="none"/></svg></button>
    <button aria-label="Viewer"><svg viewBox="0 0 16 16"><path d="M4 2h11v10H4z" fill="#eef" stroke="#69c"/><path d="M4 3h11" stroke="#48c" stroke-width="3"/><path d="M7 9l-5 6" stroke="#b73" stroke-width="2"/><circle cx="8" cy="8" r="2" fill="#bdf" stroke="#579"/></svg></button>
  </nav>
  <span class="tsep"></span>
  <nav class="tasks">
    <button><svg class="i16"><use href="#app"/></svg><span>MINI_F850_ROB_HOHA...</span></button>
    <button><svg class="i16"><use href="#app"/></svg><span>MINI_F850_ROB_HOHA...</span></button>
    <button class="active"><svg class="i16"><use href="#app"/></svg><span>18441-ROBBANTOTT_...</span></button>
    <button><svg class="i16"><use href="#app"/></svg><span>18379-SZERELT_BURKO...</span></button>
    <button><svg class="i16" viewBox="0 0 16 16"><path d="M4 1h9l2 3v11H4z" fill="#fff" stroke="#69c"/><path d="M1 3h9v9H1z" fill="#25a"/><path d="M3 5l1 5 2-4 1 4 2-5" stroke="#fff" fill="none"/><path d="M11 7h3M11 9h3M11 11h3" stroke="#69c"/></svg><span>Csökkentett F8.50 robba...</span></button>
  </nav>
  <span class="tsep"></span><span class="tsep thin"></span>
  <button class="chev" aria-label="Toolbar options"><svg viewBox="0 0 8 20"><path d="M3 4V2h4v4H5M2 4h3v4H2z" fill="none" stroke="#000"/><path d="M1 16h6l-3 3z"/></svg></button>
  <div class="tray">
    <svg viewBox="0 0 16 16"><path d="M5 1h9v8H5zM1 5h9v8H1z" fill="#88a" stroke="#446"/><path d="M3 7h5v4H3zM7 3h5v2H7z" fill="#23c"/><path d="M3 15h7" stroke="#557" stroke-width="2"/></svg>
    <svg viewBox="0 0 16 16"><circle cx="7" cy="7" r="5" fill="#bbb" stroke="#555"/><circle cx="7" cy="7" r="2" fill="#eee" stroke="#666"/><path d="M11 12q3-1 3-5M13 15q3-2 3-6" stroke="#89c" fill="none"/></svg>
    <svg viewBox="0 0 16 16"><path d="M3 8l7-4 4 4-8 5z" fill="#999" stroke="#555"/><path d="M2 2l4-1 1 4 3 0-5 5-4-5 2 0z" fill="#3b3"/><path d="M6 13l8-4v3l-7 4z" fill="#666"/></svg>
    <svg viewBox="0 0 16 16"><path d="M5 2h11v10H5z" fill="#fff"/><path d="M5 3h11" stroke="#00c" stroke-width="3"/><path d="M1 8h7v7H1z"/><path d="M3 8V5h3v3" fill="none" stroke="#000"/></svg>
    <svg viewBox="0 0 16 16"><circle cx="5" cy="4" r="3" fill="#399"/><path d="M1 14q0-7 4-7t5 7z" fill="#8cc"/><circle cx="11" cy="4" r="3" fill="#267"/><circle cx="11" cy="11" r="4" fill="#e42"/><path d="M9 9l4 4M13 9l-4 4" stroke="#fff"/></svg>
    <svg viewBox="0 0 16 16"><path d="M5 0h10v8H5z" fill="#8c3"/><path d="M1 4q4-4 9 1l-3 4q-5 0-6-5z" fill="#fff" stroke="#593"/><path d="M6 9h8v4H6z" fill="#aac" stroke="#668"/><path d="M5 15h8" stroke="#999" stroke-width="2"/></svg>
    <svg viewBox="0 0 16 16"><path d="M6 2h10v12H6z" fill="#7b0"/><path d="M1 8q6-8 13 0-7 7-13 0zM4 8q4-4 7 0-4 4-7 0z" fill="#dfa" stroke="#7b0"/></svg>
    <time>7:48</time>
  </div>
</footer>
</body>
</html>
```
FILE: styles.css
```
:root {
  --face: #d4d0c8;
  --shade: #808080;
  --dark: #404040;
  --check: repeating-conic-gradient(#fff 0 25%, #d4d0c8 0 50%) 0 0 / 2px 2px;
}
*, *::before { box-sizing: border-box; }
body {
  margin: 0;
  min-height: 100vh;
  display: flex;
  flex-direction: column;
  background: var(--face);
  color: #000;
  font: 11px/14px "DejaVu Sans Condensed", "DejaVu Sans", sans-serif;
}
.defs { display: none; }
h1, p { margin: 0; font: inherit; }
button {
  margin: 0; padding: 0; border: 0; background: none;
  color: inherit; font: inherit;
  display: flex; align-items: center; justify-content: center; flex: none;
}
svg { shape-rendering: crispEdges; display: block; flex: none; }
.i16 { width: 16px; height: 16px; }

.desktop { flex: 1; display: flex; }
.window {
  flex: 1; min-width: 0;
  display: flex; flex-direction: column;
  padding: 3px 2px 1px 3px;
  border: 1px solid;
  border-color: #fff var(--dark) var(--dark) #fff;
  border-right-width: 2px;
}

.titlebar {
  height: 19px; display: flex; align-items: center;
  padding: 0 2px;
  background: linear-gradient(90deg, #0a246a, #a6caf0);
  color: #fff;
}
.titlebar h1 { flex: 1; font-weight: bold; padding-left: 2px; white-space: nowrap; overflow: hidden; }
.cap {
  width: 16px; height: 14px;
  background: var(--face);
  border: 1px solid; border-color: #fff var(--dark) var(--dark) #fff;
  box-shadow: inset -1px -1px var(--shade);
}
.cap.close { margin-left: 2px; }
.cap svg { width: 12px; height: 10px; fill: none; stroke: #000; }

.menubar {
  height: 27px; display: flex; align-items: center; gap: 11px; padding: 1px 0 0 7px;
  border: 1px solid; border-color: #fff var(--shade) var(--shade) #fff;
}
.menubar u { text-underline-offset: 2px; }

.bars { display: flex; height: 34px; }
.bar {
  display: flex; align-items: center; padding: 0 3px;
  border: 1px solid; border-color: #fff var(--shade) var(--shade) #fff;
  border-left-width: 0;
}
.bar::before {
  content: ""; width: 3px; height: 28px; margin-right: 4px;
  border: 1px solid; border-color: #fff var(--shade) var(--shade) #fff;
}
.tb { width: 28px; height: 28px; }
.tb svg { width: 24px; height: 24px; fill: none; stroke: #000; }
.tb.off svg { stroke: var(--shade); filter: drop-shadow(1px 1px 0 #fff); }
.tb .f { fill: var(--shade); stroke: none; }
.tb use { stroke: none; }
.brown .tb svg, .brownt svg { stroke: #964b1e; }
.navy svg { stroke: #039; }
.tb.checked { background: var(--check); border: 1px solid; border-color: var(--shade) #fff #fff var(--shade); }
.tb.raised { border: 1px solid; border-color: #fff var(--dark) var(--dark) #fff; box-shadow: inset -1px -1px var(--shade); }
.drop { width: 16px; height: 28px; }
svg:has(use[href="#down"]), svg:has(use[href="#up"]) { width: 7px; height: 4px; }
svg:has(use[href="#right"]) { width: 4px; height: 7px; }

.spin {
  display: flex; width: 44px; height: 22px; margin-bottom: 6px;
  border: 2px solid; border-color: var(--dark) #fff #fff var(--dark);
}
.spin input { flex: 1; min-width: 0; border: 0; padding: 0 3px; background: var(--face); color: var(--shade); font: inherit; }
.spinbtns { width: 14px; display: flex; flex-direction: column; }
.spinbtns button { flex: 1; border: 1px solid; border-color: #fff var(--dark) var(--dark) #fff; }
.spinbtns svg { fill: var(--shade); }

.work { flex: 1; display: flex; }
.rail { width: 16px; background: var(--face); }
.canvas { flex: 1; min-width: 0; background: #fff; }
.sheet { width: 100%; height: auto; fill: none; stroke: #000; }
.sheet text { stroke: none; fill: #000; }
.sheet .b text { font: 300 13px Lato, sans-serif; text-anchor: middle; }
.sheet .y text { fill: #ff0; font: bold 7px Lato, sans-serif; }
.sheet .y .s { font-size: 6px; }
.sheet .y .m { font-size: 8px; font-weight: normal; }
.sheet .y .l { font-size: 10px; font-weight: normal; }
.sheet .y .xl { font-size: 14px; font-weight: normal; }
.info { display: flex; padding: 4px 23px 0; font: 17px/22px Lato, sans-serif; white-space: pre; }
.info span:nth-child(2) { margin-left: 48px; }
.info span:nth-child(3), .info span:nth-child(4) { margin-left: 24px; }

.tools { width: 50px; padding-left: 1px; }
.vbar {
  padding: 3px 2px;
  border: 1px solid; border-color: #fff var(--shade) var(--shade) #fff;
  border-top-width: 0;
}
.vbar::before {
  content: ""; display: block; height: 3px; margin-bottom: 4px;
  border: 1px solid; border-color: #fff var(--shade) var(--shade) #fff;
}
.vbar:first-child::before { margin-bottom: 2px; }
.vbar > div { display: flex; height: 28px; }
.more { width: 16px; height: 28px; }

.message { height: 47px; display: flex; justify-content: space-between; border-bottom: 1px solid var(--shade); }
.message p { display: flex; align-items: center; gap: 4px; padding: 0 0 4px 6px; }
.dot { width: 5px; height: 5px; border-radius: 50%; background: #00f; }
.miniscroll { width: 16px; display: flex; flex-direction: column; padding-top: 4px; }
.sb {
  width: 16px; height: 16px; flex: none; background: var(--face);
  display: flex; align-items: center; justify-content: center;
  border: 1px solid; border-color: #fff var(--dark) var(--dark) #fff;
  box-shadow: inset -1px -1px var(--shade);
}
.track { flex: 1; background: var(--check); }
.thumb { background: var(--face); border: 1px solid; border-color: #fff var(--dark) var(--dark) #fff; box-shadow: inset -1px -1px var(--shade); }
.miniscroll .thumb { height: 7px; }

.status { height: 26px; display: flex; justify-content: flex-end; align-items: center; border-top: 1px solid #fff; padding: 0 37px 2px 0; }
.sep { width: 2px; height: 22px; border-left: 1px solid var(--shade); border-right: 1px solid #fff; margin-right: 96px; }
.sep.last { margin: 0 0 0 2px; }
.combo { display: flex; width: 155px; height: 20px; background: #fff; border: 2px solid; border-color: var(--dark) #fff #fff var(--dark); }
.combo select { flex: 1; min-width: 0; appearance: none; border: 0; background: #fff; }

.word { width: 113px; display: flex; flex-direction: column; background: var(--face); }
.wtitle { height: 19px; background: #c0c0c0; border-bottom: 1px solid var(--face); display: flex; justify-content: flex-end; align-items: center; padding-right: 2px; }
.wtitle .cap.close { margin-left: 3px; }
.whelp { height: 77px; display: flex; align-items: flex-start; padding-top: 3px; background: #f5f5f3; border-bottom: 1px solid var(--shade); }
.whelp input { width: 80px; height: 17px; padding: 0; border: 0; background: #fff; color: var(--shade); font: inherit; }
.wdrop { width: 15px; height: 17px; }
.wdrop svg { width: 5px; height: 3px; }
.wx { width: 18px; height: 17px; }
.wx svg { width: 12px; height: 10px; fill: none; stroke: #000; }
.wbody { flex: 1; display: flex; border-top: 1px solid var(--dark); }
.wleft { flex: 1; display: flex; flex-direction: column; }
.ruler { height: 24px; }
.grey { flex: 1; background: var(--shade); }
.hscroll { height: 16px; display: flex; }
.hscroll .thumb { flex: 1; }
.hscroll .track { flex: 0 0 1px; }
.vscroll { width: 18px; padding-right: 2px; display: flex; flex-direction: column; }
.vscroll .split { height: 6px; border: 1px solid; border-color: #fff var(--dark) var(--dark) #fff; }
.vscroll .track { flex: 375; }
.vscroll .thumb { flex: 372; }
.pg { width: 16px; height: 16px; }
.pg:last-child { margin-bottom: 16px; }
.pg svg { width: 8px; height: 8px; }
.pg.ball svg { shape-rendering: auto; }
.wdraw { height: 28px; background: #f5f5f3; border-top: 1px solid #fff; border-bottom: 1px solid var(--shade); }
.wstat { height: 21px; border-top: 1px solid #fff; }

.taskbar { height: 30px; display: flex; align-items: center; padding: 0 2px 1px; border-top: 1px solid #fff; }
.start {
  width: 52px; height: 22px; gap: 2px; font-weight: bold;
  border: 1px solid; border-color: #fff var(--dark) var(--dark) #fff; box-shadow: inset -1px -1px var(--shade);
}
.start svg { width: 16px; height: 16px; shape-rendering: auto; }
.tsep { width: 3px; height: 22px; margin: 0 6px; border: 1px solid; border-color: #fff var(--shade) var(--shade) #fff; }
.tsep.thin { width: 2px; margin: 0 4px 0 0; border-width: 0 1px; }
.quick { width: 154px; display: flex; gap: 7px; padding-left: 1px; }
.quick svg { width: 16px; height: 16px; shape-rendering: auto; }
.tasks { flex: 1; min-width: 0; display: flex; gap: 3px; }
.tasks button {
  flex: 0 1 160px; min-width: 0; height: 22px; padding: 0 4px; gap: 3px; justify-content: flex-start;
  border: 1px solid; border-color: #fff var(--dark) var(--dark) #fff; box-shadow: inset -1px -1px var(--shade);
}
.tasks span { white-space: nowrap; overflow: hidden; }
.tasks .active { background: var(--check); border-color: var(--dark) #fff #fff var(--dark); box-shadow: none; font-weight: bold; }
.chev { width: 14px; height: 20px; }
.chev svg { width: 8px; height: 20px; }
.tray { width: 170px; height: 22px; display: flex; align-items: center; gap: 2px; padding-left: 2px; border: 1px solid; border-color: var(--shade) #fff #fff var(--shade); }
.tray svg { width: 16px; height: 16px; shape-rendering: auto; }
.tray time { margin-left: auto; padding-right: 10px; }
```
